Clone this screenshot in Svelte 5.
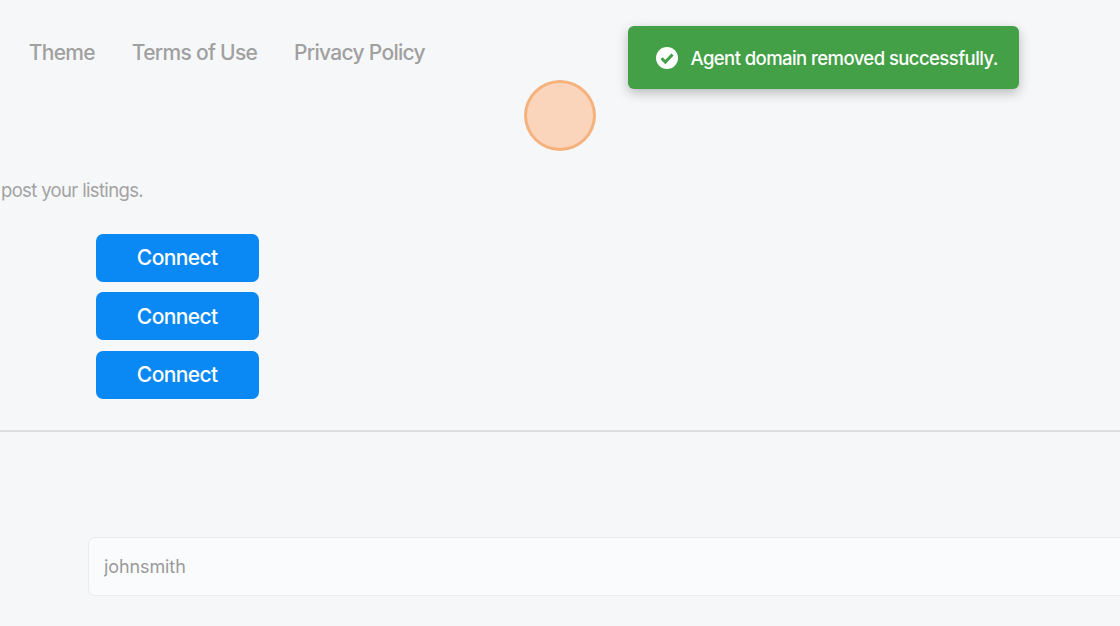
<script>
    const links = ['Theme', 'Terms of Use', 'Privacy Policy'];
    const rows = [1, 2, 3];
</script>

<div class="page">
    <nav class="nav">
        {#each links as link}
            <span class="nav-link">{link}</span>
        {/each}
    </nav>

    <p class="intro">post your listings.</p>

    <div class="connect-list">
        {#each rows as row (row)}
            <button type="button" class="connect">Connect</button>
        {/each}
    </div>

    <hr class="divider" />

    <div class="field">
        <input type="text" value="johnsmith" readonly />
    </div>

    <!-- click marker -->
    <div class="marker"></div>

    <div class="toast">
        <svg width="24" height="24" viewBox="0 0 24 24" aria-hidden="true">
            <circle cx="12" cy="12" r="11" fill="#fff" />
            <path d="M6.6 12.3l3.7 3.7 7.2-7.5" fill="none" stroke="#43a047" stroke-width="3" />
        </svg>
        <span>Agent domain removed successfully.</span>
    </div>
</div>

<style>
    :global(body) {
        margin: 0;
        background: #f6f7f9;
    }

    .page {
        position: relative;
        width: 1120px;
        height: 626px;
        overflow: hidden;
        background: #f6f7f9;
        font-family: Inter, 'Liberation Sans', sans-serif;
    }

    .nav {
        display: flex;
        gap: 36.8px;
        padding: 41px 0 0 28.8px;
    }

    .nav-link {
        font-size: 21px;
        line-height: 24px;
        font-weight: 500;
        letter-spacing: -0.7px;
        color: #a0a0a0;
    }

    .intro {
        margin: 0;
        padding: 114px 0 0 1px;
        font-size: 18.5px;
        line-height: 22px;
        letter-spacing: -0.65px;
        color: #a3a3a3;
    }

    .connect-list {
        display: flex;
        flex-direction: column;
        gap: 10.6px;
        padding: 32.6px 0 0 95.5px;
    }

    .connect {
        width: 163.5px;
        height: 48px;
        border: 0;
        border-radius: 7px;
        background: #0a88f4;
        color: #fff;
        font-family: inherit;
        font-size: 21px;
        font-weight: 500;
        letter-spacing: -0.6px;
        padding: 0;
    }

    .divider {
        height: 2px;
        margin: 31.2px 0 0;
        border: 0;
        background: #dcdee0;
    }

    .field {
        padding: 105px 0 0 88px;
    }

    .field input {
        box-sizing: border-box;
        display: block;
        width: 1100px;
        height: 59px;
        padding: 0 15px;
        border: 1px solid #e9ebed;
        border-radius: 7px;
        background: #fafbfc;
        color: #9a9a9a;
        font-family: inherit;
        font-size: 18px;
        letter-spacing: -0.1px;
        outline: none;
    }

    .marker {
        position: absolute;
        left: 524px;
        top: 80px;
        width: 72px;
        height: 71px;
        box-sizing: border-box;
        border: 3.5px solid #f5b27c;
        border-radius: 50%;
        background: #fad5bb;
    }

    .toast {
        position: absolute;
        left: 628px;
        top: 26px;
        width: 391px;
        height: 63px;
        box-sizing: border-box;
        display: flex;
        align-items: center;
        gap: 11.5px;
        padding-left: 27px;
        border-radius: 6px;
        background: #43a047;
        color: #fff;
        font-size: 18.5px;
        font-weight: 500;
        letter-spacing: -0.57px;
        white-space: nowrap;
        box-shadow: 0 4px 12px rgba(0, 0, 0, 0.25);
    }
</style>
